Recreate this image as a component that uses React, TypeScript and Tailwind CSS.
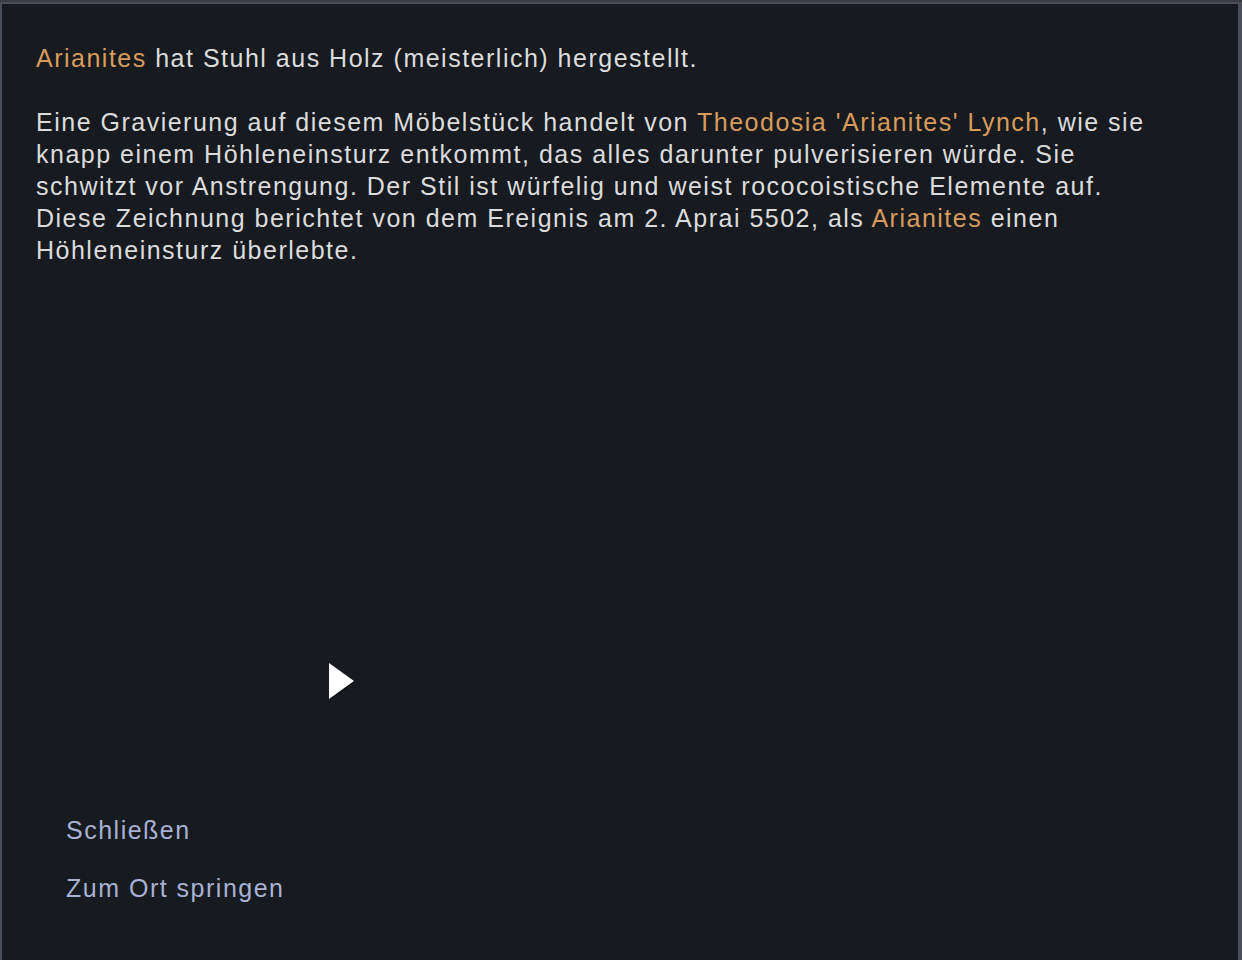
import React from "react";

const O = ({ children }: { children: React.ReactNode }) => (
  <span className="text-[#d79c5c]">{children}</span>
);

export default function App() {
  return (
    <div className="w-[1242px] h-[960px] bg-[#2a2c31] flex flex-col">
      <div className="h-[2px] bg-[#3a3c42]" />
      <div className="relative flex-1 bg-[#171a1f] border-l-2 border-t-2 border-r-[4px] border-[#4a4e58] flex flex-col font-['Liberation_Sans',Arial,sans-serif] text-[25px] tracking-[1.5px] leading-[32px] text-[#dcdcdc]">
        <div className="pl-[34px] pt-[38px]">
          <p>
            <O>Arianites</O> hat Stuhl aus Holz (meisterlich) hergestellt.
          </p>
          <p className="mt-[32px]">
            <span className="block whitespace-nowrap">
              Eine Gravierung auf diesem Möbelstück handelt von <O>Theodosia 'Arianites' Lynch</O>, wie sie
            </span>
            <span className="block whitespace-nowrap">
              knapp einem Höhleneinsturz entkommt, das alles darunter pulverisieren würde. Sie
            </span>
            <span className="block whitespace-nowrap">
              schwitzt vor Anstrengung. Der Stil ist würfelig und weist rococoistische Elemente auf.
            </span>
            <span className="block whitespace-nowrap">
              Diese Zeichnung berichtet von dem Ereignis am 2. Aprai 5502, als <O>Arianites</O> einen
            </span>
            <span className="block whitespace-nowrap">Höhleneinsturz überlebte.</span>
          </p>
        </div>
        <div className="mt-auto pl-[64px] pb-[56px] flex flex-col gap-[26px] text-[#a9b1d4]">
          <span>Schließen</span>
          <span>Zum Ort springen</span>
        </div>
        <svg
          className="absolute left-[325px] top-[657px]"
          width="30"
          height="40"
          viewBox="0 0 30 40"
        >
          <polygon points="2,2 2,38 27,20" fill="#000" opacity="0.5" transform="translate(1,1)" />
          <polygon points="2,2 2,38 27,20" fill="#ffffff" />
        </svg>
      </div>
    </div>
  );
}
